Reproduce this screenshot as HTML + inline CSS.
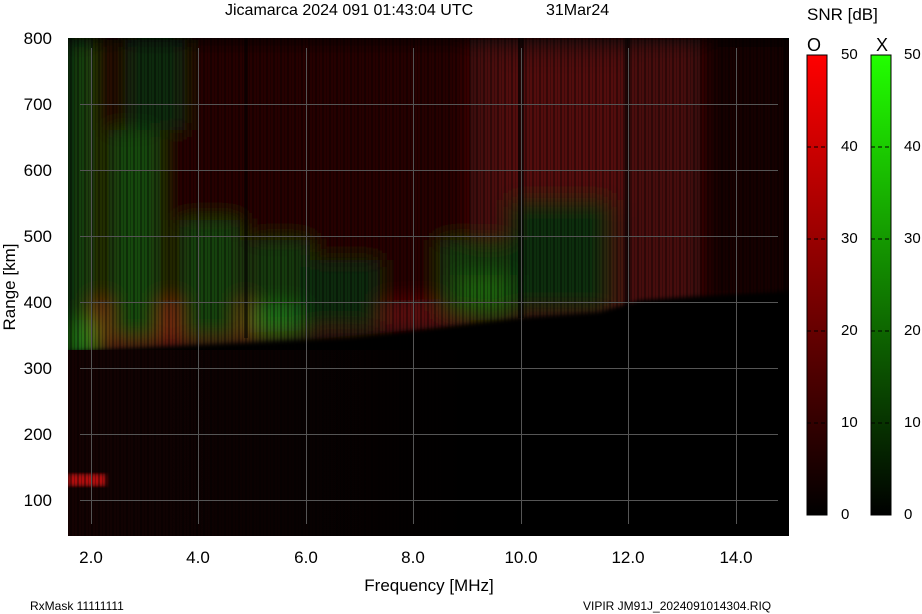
<!DOCTYPE html>
<html><head><meta charset="utf-8"><style>
html,body{margin:0;padding:0;background:#fff;}
body{width:922px;height:614px;overflow:hidden;position:relative;font-family:"Liberation Sans",sans-serif;}
</style></head><body>
<svg width="922" height="614" viewBox="0 0 922 614" xmlns="http://www.w3.org/2000/svg" style="position:absolute;left:0;top:0">
<defs>
<linearGradient id="rg" x1="0" y1="0" x2="0" y2="1"><stop offset="0" stop-color="#ff0000"/><stop offset="1" stop-color="#000"/></linearGradient>
<linearGradient id="gg" x1="0" y1="0" x2="0" y2="1"><stop offset="0" stop-color="#22ff00"/><stop offset="1" stop-color="#000"/></linearGradient>
<linearGradient id="fade" x1="0" y1="0" x2="1" y2="0"><stop offset="0" stop-color="#140202"/><stop offset="1" stop-color="#000"/></linearGradient>
<filter id="b8"><feGaussianBlur stdDeviation="10"/></filter>
<filter id="b2"><feGaussianBlur stdDeviation="2"/></filter>
<pattern id="vs" width="7" height="40" patternUnits="userSpaceOnUse"><rect width="2" height="40" fill="#000" opacity=".35"/><rect x="4" width="1" height="40" fill="#000" opacity=".25"/></pattern>
<clipPath id="pc"><rect x="68" y="38" width="721" height="498"/></clipPath>
</defs>
<rect x="68" y="38" width="721" height="498" fill="#000"/>
<g clip-path="url(#pc)">
<g filter="url(#b8)">
<rect x="68" y="40" width="722" height="300" fill="#260404"/>
<rect x="470" y="40" width="230" height="280" fill="#460707"/>
<rect x="500" y="60" width="130" height="150" fill="#520808"/>
<rect x="700" y="40" width="90" height="260" fill="#160202"/>
<polygon points="90,300 250,300 250,345 100,352" fill="#7a0c0c"/>
<polygon points="250,305 470,298 470,325 250,345" fill="#5a0909"/>
<rect x="68" y="40" width="25" height="320" fill="#164a0c"/>
<rect x="110" y="130" width="50" height="210" fill="#164a0c"/>
<rect x="125" y="40" width="60" height="90" fill="#0e2a08"/>
<rect x="180" y="220" width="60" height="120" fill="#144210"/>
<rect x="250" y="240" width="60" height="95" fill="#123a0c"/>
<rect x="300" y="260" width="80" height="70" fill="#0e2c08"/>
<rect x="440" y="240" width="70" height="75" fill="#123a0c"/>
<rect x="510" y="200" width="100" height="110" fill="#0e2e08"/>
<rect x="68" y="320" width="28" height="40" fill="#208014"/>
<rect x="250" y="305" width="50" height="30" fill="#1e6e12"/>
<rect x="460" y="275" width="50" height="35" fill="#1c6010"/>
<rect x="68" y="458" width="25" height="8" fill="#144010"/>
</g>
<polygon filter="url(#b2)" points="60,352 100,350 350,338 470,324 520,318 600,312 640,300 700,296 800,290 800,540 60,540" fill="#000"/>
<rect x="68" y="350" width="400" height="190" fill="url(#fade)"/>
<rect x="68" y="474" width="38" height="12" fill="#b01010" filter="url(#b2)"/>
<rect x="68" y="38" width="721" height="498" fill="url(#vs)"/>
<rect x="518" y="38" width="6" height="280" fill="#000" opacity=".6"/>
<rect x="244" y="38" width="4" height="300" fill="#000" opacity=".5"/>
<rect x="625" y="38" width="5" height="280" fill="#000" opacity=".6"/>
</g>
<g stroke="#555" stroke-width="1">
<line x1="80" y1="104.5" x2="778" y2="104.5"/><line x1="80" y1="170.5" x2="778" y2="170.5"/><line x1="80" y1="236.5" x2="778" y2="236.5"/><line x1="80" y1="302.5" x2="778" y2="302.5"/><line x1="80" y1="368.5" x2="778" y2="368.5"/><line x1="80" y1="434.5" x2="778" y2="434.5"/><line x1="80" y1="500.5" x2="778" y2="500.5"/>
<line x1="91.5" y1="48" x2="91.5" y2="524"/><line x1="198.5" y1="48" x2="198.5" y2="524"/><line x1="306.5" y1="48" x2="306.5" y2="524"/><line x1="413.5" y1="48" x2="413.5" y2="524"/><line x1="521.5" y1="48" x2="521.5" y2="524"/><line x1="628.5" y1="48" x2="628.5" y2="524"/><line x1="736.5" y1="48" x2="736.5" y2="524"/>
</g>
<rect x="807" y="55" width="20" height="460" fill="url(#rg)" stroke="#000" stroke-width="1"/>
<rect x="871" y="55" width="20" height="460" fill="url(#gg)" stroke="#000" stroke-width="1"/>
<g stroke="#000" stroke-dasharray="4,3">
<line x1="807" y1="147" x2="827" y2="147"/><line x1="807" y1="239" x2="827" y2="239"/><line x1="807" y1="331" x2="827" y2="331"/><line x1="807" y1="423" x2="827" y2="423"/>
<line x1="871" y1="147" x2="891" y2="147"/><line x1="871" y1="239" x2="891" y2="239"/><line x1="871" y1="331" x2="891" y2="331"/><line x1="871" y1="423" x2="891" y2="423"/>
</g>
<g font-family="Liberation Sans, sans-serif" fill="#000">
<text x="225" y="15" font-size="16">Jicamarca 2024 091 01:43:04 UTC</text>
<text x="546" y="15" font-size="16">31Mar24</text>
<text x="807" y="20" font-size="17">SNR [dB]</text>
<text x="807" y="51" font-size="18">O</text>
<text x="876" y="51" font-size="18">X</text>
<g font-size="15">
<text x="841" y="59">50</text><text x="841" y="151">40</text><text x="841" y="243">30</text><text x="841" y="335">20</text><text x="841" y="427">10</text><text x="841" y="519">0</text>
<text x="904" y="59">50</text><text x="904" y="151">40</text><text x="904" y="243">30</text><text x="904" y="335">20</text><text x="904" y="427">10</text><text x="904" y="519">0</text>
</g>
<g font-size="17" text-anchor="end">
<text x="52" y="44">800</text><text x="52" y="110">700</text><text x="52" y="176">600</text><text x="52" y="242">500</text><text x="52" y="308">400</text><text x="52" y="374">300</text><text x="52" y="440">200</text><text x="52" y="506">100</text>
</g>
<g font-size="17" text-anchor="middle">
<text x="91" y="563">2.0</text><text x="198" y="563">4.0</text><text x="306" y="563">6.0</text><text x="413" y="563">8.0</text><text x="521" y="563">10.0</text><text x="628" y="563">12.0</text><text x="736" y="563">14.0</text>
<text x="429" y="591">Frequency [MHz]</text>
</g>
<text transform="translate(15,287) rotate(-90)" font-size="17" text-anchor="middle">Range [km]</text>
<text x="30" y="610" font-size="12">RxMask 11111111</text>
<text x="583" y="610" font-size="12">VIPIR  JM91J_2024091014304.RIQ</text>
</g>
</svg>
</body></html>
